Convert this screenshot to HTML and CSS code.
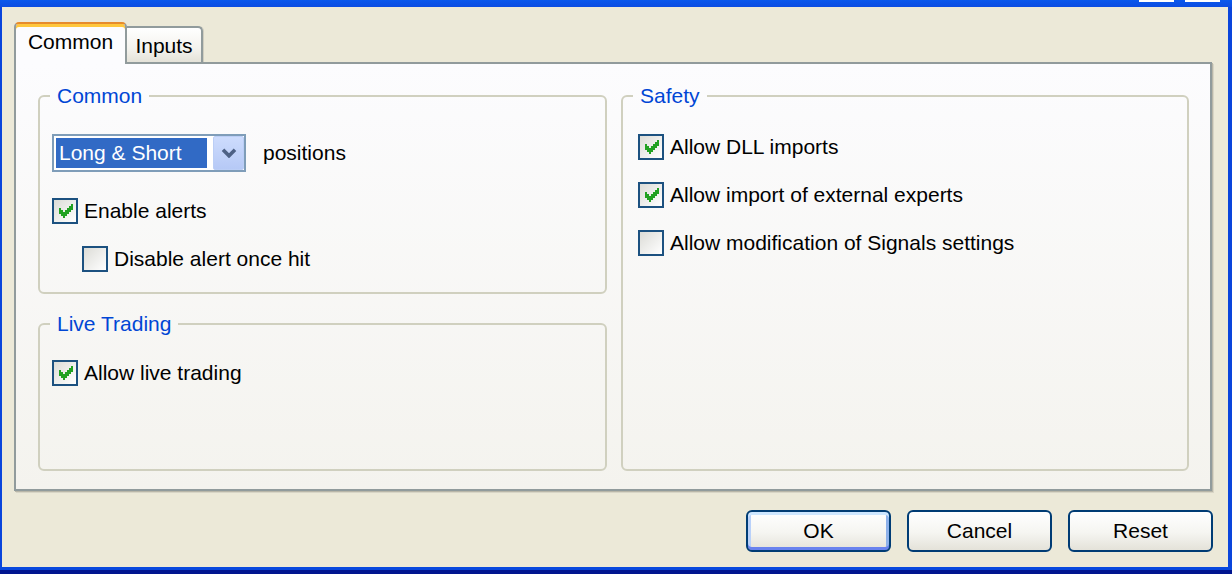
FILE: index.html
```html
<!DOCTYPE html>
<html>
<head>
<meta charset="utf-8">
<link rel="stylesheet" href="styles.css">
</head>
<body>
<div class="window">
  <div class="frame-top"><span class="tbtn"></span><span class="tbtn"></span></div>
  <div class="client">
    <div class="tabs">
      <div class="tab tab-active">Common</div>
      <div class="tab tab-inactive">Inputs</div>
    </div>
    <div class="panel">
      <div class="col">
        <fieldset class="group g-common">
          <legend>Common</legend>
          <div class="gbody">
            <div class="combo-row">
              <div class="combo">
                <div class="sel">Long &amp; Short</div>
                <div class="drop"><svg width="16" height="10" viewBox="0 0 8 5"><polyline points="1,0.9 4,3.9 7,0.9" fill="none" stroke="#4D6185" stroke-width="1.8"/></svg></div>
              </div>
              <span>positions</span>
            </div>
            <div class="check-row r-first"><span class="cb"><svg class="tick" width="15" height="14" viewBox="0 0 7 7"><path d="M6 0h1v1h-1z M5 1h2v1h-2z M0 2h1v1h-1z M4 2h3v1h-3z M0 3h2v1h-2z M3 3h3v1h-3z M0 4h5v1h-5z M1 5h3v1h-3z M2 6h1v1h-1z"/></svg></span><span>Enable alerts</span></div>
            <div class="check-row r-next r-indent"><span class="cb"></span><span>Disable alert once hit</span></div>
          </div>
        </fieldset>
        <fieldset class="group g-live">
          <legend>Live Trading</legend>
          <div class="gbody">
            <div class="check-row r-live"><span class="cb"><svg class="tick" width="15" height="14" viewBox="0 0 7 7"><path d="M6 0h1v1h-1z M5 1h2v1h-2z M0 2h1v1h-1z M4 2h3v1h-3z M0 3h2v1h-2z M3 3h3v1h-3z M0 4h5v1h-5z M1 5h3v1h-3z M2 6h1v1h-1z"/></svg></span><span>Allow live trading</span></div>
          </div>
        </fieldset>
      </div>
      <fieldset class="group g-safety">
        <legend>Safety</legend>
        <div class="gbody gbody-safety">
          <div class="check-row r-first"><span class="cb"><svg class="tick" width="15" height="14" viewBox="0 0 7 7"><path d="M6 0h1v1h-1z M5 1h2v1h-2z M0 2h1v1h-1z M4 2h3v1h-3z M0 3h2v1h-2z M3 3h3v1h-3z M0 4h5v1h-5z M1 5h3v1h-3z M2 6h1v1h-1z"/></svg></span><span>Allow DLL imports</span></div>
          <div class="check-row r-next"><span class="cb"><svg class="tick" width="15" height="14" viewBox="0 0 7 7"><path d="M6 0h1v1h-1z M5 1h2v1h-2z M0 2h1v1h-1z M4 2h3v1h-3z M0 3h2v1h-2z M3 3h3v1h-3z M0 4h5v1h-5z M1 5h3v1h-3z M2 6h1v1h-1z"/></svg></span><span>Allow import of external experts</span></div>
          <div class="check-row r-next"><span class="cb"></span><span>Allow modification of Signals settings</span></div>
        </div>
      </fieldset>
    </div>
    <div class="buttons">
      <button class="btn btn-default">OK</button>
      <button class="btn">Cancel</button>
      <button class="btn">Reset</button>
    </div>
  </div>
  <div class="frame-bottom"></div>
</div>
</body>
</html>
```
FILE: styles.css
```css
html, body {
  margin: 0;
  padding: 0;
}
body {
  font-family: "Liberation Sans", Arial, sans-serif;
  font-size: 21px;
  color: #000;
}
.window {
  width: 1232px;
  height: 574px;
  box-sizing: border-box;
  display: flex;
  flex-direction: column;
  background: #0A45DC;
  border-bottom: 4px solid #00158F;
}
.frame-top {
  height: 7px;
  flex: none;
  background: linear-gradient(#0A58EC, #0B4CE2);
  display: flex;
  justify-content: flex-end;
  align-items: flex-start;
  gap: 11px;
  padding-right: 12px;
}
.tbtn {
  width: 35px;
  height: 2px;
  background: #FFFFFF;
}
.client {
  flex: 1;
  margin: 0 4px 0 2px;
  background: #ECE9D8;
  display: flex;
  flex-direction: column;
  padding: 15px 0 0 12px;
  min-height: 0;
}
.frame-bottom {
  height: 3px;
  flex: none;
  background: #0848DE;
}
.tabs {
  display: flex;
  align-items: flex-end;
  height: 42px;
  margin-bottom: -2px;
  position: relative;
  z-index: 1;
}
.tab {
  box-sizing: border-box;
  display: flex;
  align-items: center;
  justify-content: center;
}
.tab-active {
  width: 113px;
  height: 42px;
  border: 2px solid #919B9C;
  border-top: 2px solid #E68B2C;
  border-bottom: 0;
  border-radius: 5px 5px 0 0;
  box-shadow: inset 0 3px 0 #FFC73C;
  background: #FCFCFE;
  padding-bottom: 5px;
}
.tab-inactive {
  width: 76px;
  height: 36px;
  margin-bottom: 2px;
  border: 2px solid #919B9C;
  border-left: 0;
  border-bottom: 0;
  border-radius: 0 5px 0 0;
  background: linear-gradient(#FFFFFF, #F4F3EE 60%, #E4E2D8);
  box-shadow: 1px 0 0 #D0CEC0;
  padding-top: 2px;
}
.panel {
  width: 1198px;
  height: 429px;
  flex: none;
  box-sizing: border-box;
  border: 2px solid #919B9C;
  box-shadow: 1px 1px 0 #B8B6A8, 2px 2px 0 #D8D5C6;
  background: linear-gradient(#FCFCFE, #F4F3EE);
  padding: 20px 21px 18px 22px;
  display: flex;
  gap: 14px;
}
.col {
  width: 569px;
  display: flex;
  flex-direction: column;
  gap: 18px;
}
.group {
  margin: 0;
  border: 2px solid #D0D0BF;
  border-radius: 6px;
  padding: 0;
  min-width: 0;
  box-sizing: border-box;
}
.group legend {
  padding: 0 7px;
  margin-left: 10px;
  line-height: 24px;
  color: #0046D5;
}
.gbody {
  padding-left: 12px;
}
.gbody-safety {
  padding-left: 15px;
}
.g-common {
  height: 210px;
  flex: none;
}
.g-live {
  flex: 1;
}
.g-safety {
  width: 568px;
}
.combo-row {
  display: flex;
  align-items: center;
  gap: 17px;
  margin-top: 26px;
}
.combo {
  box-sizing: border-box;
  width: 194px;
  height: 38px;
  border: 2px solid #7F9DB9;
  background: #FFFFFF;
  display: flex;
}
.sel {
  margin: 2px;
  width: 151px;
  box-sizing: border-box;
  background: #316AC5;
  color: #FFFFFF;
  padding-left: 3px;
  display: flex;
  align-items: center;
}
.drop {
  margin-left: auto;
  width: 31px;
  box-sizing: border-box;
  border: 1px solid #BBCEF6;
  border-radius: 2px;
  background: linear-gradient(#CDDCFD, #B6C9F6);
  display: flex;
  align-items: center;
  justify-content: center;
}
.check-row {
  display: flex;
  align-items: center;
  gap: 6px;
  height: 26px;
}
.r-first {
  margin-top: 26px;
}
.r-next {
  margin-top: 22px;
}
.r-indent {
  margin-left: 30px;
}
.r-live {
  margin-top: 24px;
}
.cb {
  width: 26px;
  height: 26px;
  flex: none;
  box-sizing: border-box;
  border: 2px solid #1C5180;
  background: linear-gradient(135deg, #DCDCD7, #FFFFFF);
  display: flex;
  align-items: center;
  justify-content: center;
}
.tick {
  fill: #21A121;
  shape-rendering: crispEdges;
}
.buttons {
  display: flex;
  justify-content: flex-end;
  gap: 16px;
  margin-top: 19px;
  padding-right: 15px;
}
.btn {
  width: 145px;
  height: 42px;
  box-sizing: border-box;
  border: 2px solid #003C74;
  border-radius: 6px;
  background: linear-gradient(#FFFFFF 0%, #F5F5F1 55%, #E4E2D9 100%);
  font: inherit;
  color: #000;
  display: flex;
  align-items: center;
  justify-content: center;
  padding: 0;
}
.btn-default {
  box-shadow: inset 0 3px 0 #CEE7FF, inset 0 -3px 0 #6982EE, inset 3px 0 0 #B9D1FA, inset -3px 0 0 #8DB1EA;
}
```
